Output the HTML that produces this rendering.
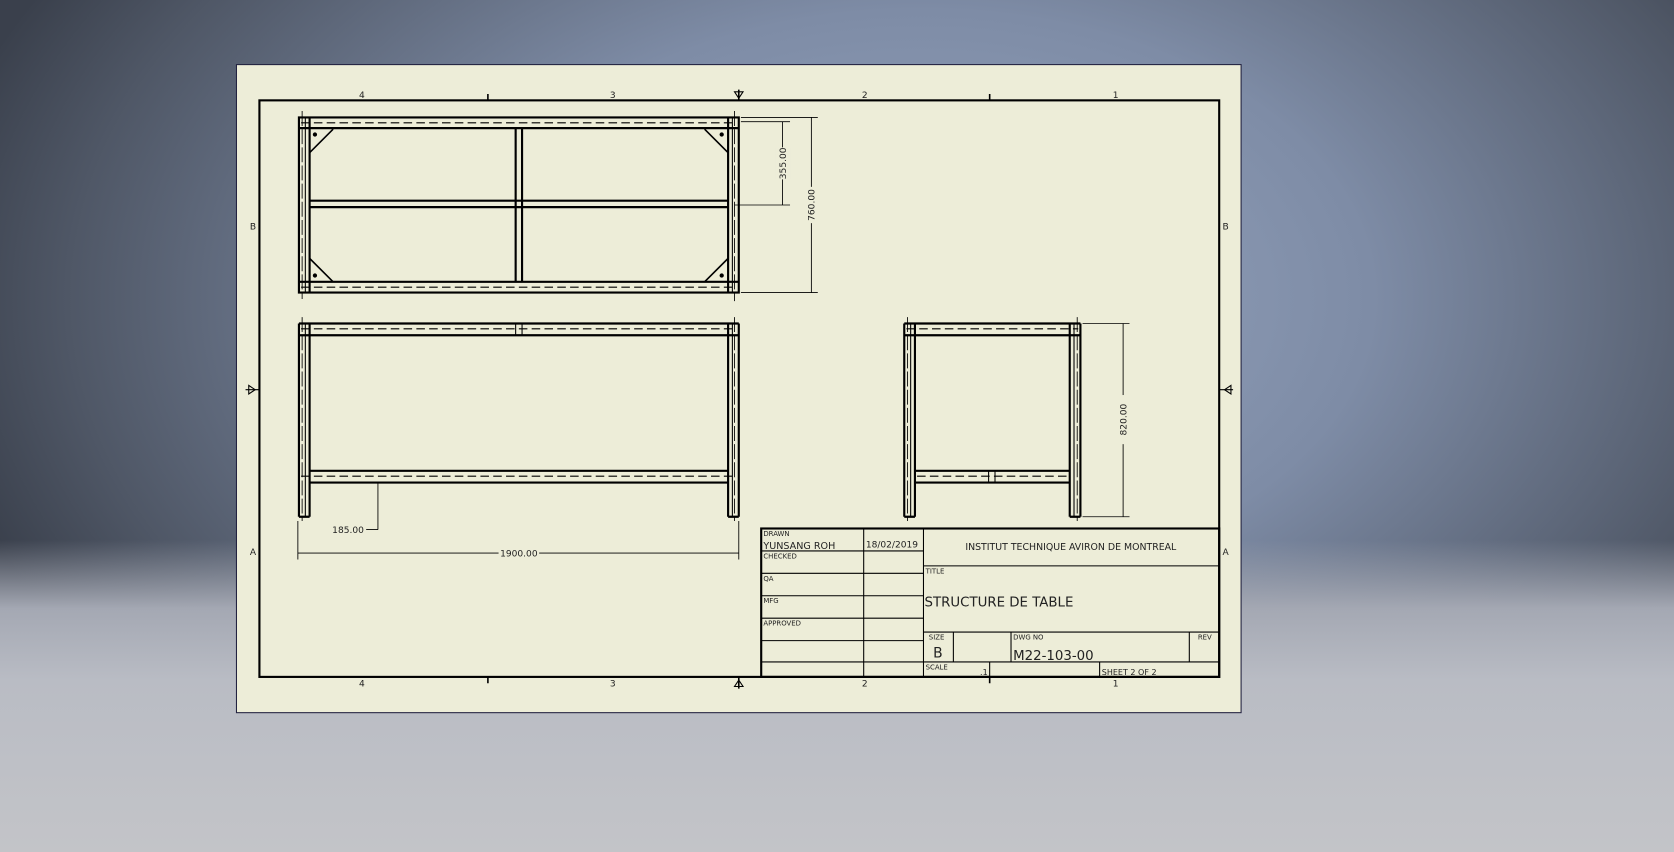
<!DOCTYPE html>
<html><head><meta charset="utf-8"><style>
html,body{margin:0;padding:0;width:1674px;height:852px;overflow:hidden}
body{background:radial-gradient(ellipse 60% 75% at 55% 35%,#97a6c0 0%,#7e8ca6 45%,#4f5766 85%,#3a404c 100%)}
.bot{position:absolute;left:0;top:540px;width:1674px;height:312px;background:linear-gradient(rgba(160,166,178,0),#a4a8b3 22%,#b9bcc4 45%,#c3c4c8)}
svg{position:absolute;left:0;top:0}
text{font-family:"DejaVu Sans","Liberation Sans",sans-serif;fill:#222}
</style></head><body>
<div class="bot"></div>
<svg width="1674" height="852" viewBox="0 0 1568 798" preserveAspectRatio="none">
<rect x="221.5" y="60.5" width="941" height="607" fill="#ededd8" stroke="#222240" stroke-width="1"/>
<g stroke="#000" fill="none">
<rect x="243" y="94" width="899" height="540" stroke-width="2"/>
<path d="M457 88V94M927 88V94M457 634V640M927 634V640M692 84V94M692 634V645" stroke-width="1.5"/>
<path d="M688 86h8l-4 6zM688 643h8l-4-6zM233 361v8l6-4zM1153 361v8l-6-4z" stroke-width="1"/>
<path d="M230 365h13M1142 365h13" stroke-width="1"/>
</g>
<g font-size="8.5" text-anchor="middle">
<text x="339" y="92">4</text><text x="574" y="92">3</text><text x="810" y="92">2</text><text x="1045" y="92">1</text>
<text x="339" y="643">4</text><text x="574" y="643">3</text><text x="810" y="643">2</text><text x="1045" y="643">1</text>
<text x="237" y="215">B</text><text x="237" y="520">A</text><text x="1148" y="215">B</text><text x="1148" y="520">A</text>
</g>
<!-- top view -->
<g stroke="#000" fill="none">
<rect x="280" y="110" width="412" height="164" stroke-width="2"/>
<path d="M280 120H692M280 264H692M290 110V274M682 110V274M290 188H682M290 194H682M483 120V264M489 120V264" stroke-width="2"/>
<path d="M286 110V274M686 110V274" stroke-width="1"/>
<path d="M282 115H690M282 269H690" stroke-width="1" stroke-dasharray="8,4"/>
<path d="M283 104V280M688 104V282" stroke-width="0.8" stroke-dasharray="14,3"/>
<path d="M290 143L312 121M660 121L682 143M290 242L312 264M660 264L682 242" stroke-width="1.5"/>
<path d="M694 110H766M694 274H766M694 114H740M688 192H740M733 114V192M760 110V274" stroke-width="0.8"/>
</g>
<circle cx="295" cy="126" r="2" fill="#000"/><circle cx="676" cy="126" r="2" fill="#000"/>
<circle cx="295" cy="258" r="2" fill="#000"/><circle cx="676" cy="258" r="2" fill="#000"/>
<rect x="726" y="138" width="14" height="30" fill="#ededd8"/><rect x="753" y="175" width="14" height="34" fill="#ededd8"/>
<text font-size="8.5" transform="translate(736,153) rotate(-90)" text-anchor="middle">355.00</text>
<text font-size="8.5" transform="translate(763,192) rotate(-90)" text-anchor="middle">760.00</text>
<!-- front view -->
<g stroke="#000" fill="none">
<path d="M280 303H692M280 314H692M290 441H682M290 452H682M280 303V484M290 303V484M682 303V484M692 303V484M280 484H290M682 484H692" stroke-width="2"/>
<path d="M286 303V484M686 303V484M483 303V314M489 303V314" stroke-width="1"/>
<path d="M282 308H690M282 446H690" stroke-width="1" stroke-dasharray="8,4"/>
<path d="M283 297V488M688 297V488" stroke-width="0.8" stroke-dasharray="14,3"/>
<path d="M354 452V496M343 496H354M279 488V524M692 488V524M279 518H692" stroke-width="0.8"/>
</g>
<rect x="467" y="512" width="38" height="11" fill="#ededd8"/>
<text font-size="8.5" x="326" y="499" text-anchor="middle">185.00</text>
<text font-size="8.5" x="486" y="521" text-anchor="middle">1900.00</text>
<!-- side view -->
<g stroke="#000" fill="none">
<path d="M847 303H1012M847 314H1012M857 441H1002M857 452H1002M847 303V484M857 303V484M1002 303V484M1012 303V484M847 484H857M1002 484H1012" stroke-width="2"/>
<path d="M853 303V484M1006 303V484M926 441V452M932 441V452" stroke-width="1"/>
<path d="M849 308H1010M859 446H1000" stroke-width="1" stroke-dasharray="8,4"/>
<path d="M850 297V488M1009 297V488" stroke-width="0.8" stroke-dasharray="14,3"/>
<path d="M1014 303H1058M1014 484H1058M1052 303V484" stroke-width="0.8"/>
</g>
<rect x="1045" y="370" width="14" height="46" fill="#ededd8"/>
<text font-size="8.5" transform="translate(1055,393) rotate(-90)" text-anchor="middle">820.00</text>
<!-- title block -->
<g stroke="#000" fill="none">
<rect x="713" y="495" width="429" height="139" stroke-width="2"/>
<path d="M809 495V634M865 495V634M713 516H865M713 537H865M713 558H865M713 579H865M713 600H865M713 620H1142M865 530H1142M865 592H1142M893 592V620M947 592V620M1114 592V620M927 620V634M1030 620V634" stroke-width="1"/>
</g>
<g font-size="6.5">
<text x="715" y="502">DRAWN</text><text x="715" y="523">CHECKED</text><text x="715" y="544">QA</text><text x="715" y="565">MFG</text><text x="715" y="586">APPROVED</text>
<text x="867" y="537">TITLE</text><text x="870" y="599">SIZE</text><text x="949" y="599">DWG NO</text><text x="1122" y="599">REV</text><text x="867" y="627">SCALE</text>
</g>
<text font-size="9" x="715" y="514">YUNSANG ROH</text>
<text font-size="8.5" x="811" y="513">18/02/2019</text>
<text font-size="8.8" x="1003" y="515" text-anchor="middle">INSTITUT TECHNIQUE AVIRON DE MONTREAL</text>
<text font-size="12.5" x="866" y="568">STRUCTURE DE TABLE</text>
<text font-size="13" x="874" y="616">B</text>
<text font-size="12.5" x="949" y="618">M22-103-00</text>
<text font-size="7.5" x="918" y="632">.1</text>
<text font-size="7.5" x="1032" y="632">SHEET 2  OF 2</text>
</svg>
</body></html>
